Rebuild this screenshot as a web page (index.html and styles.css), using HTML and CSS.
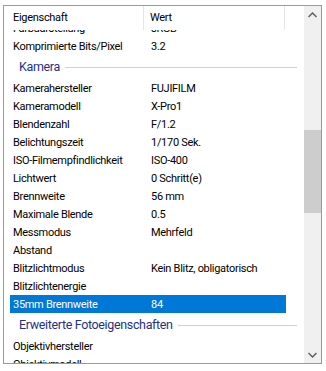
FILE: index.html
```html
<!DOCTYPE html>
<html>
<head>
<meta charset="utf-8">
<link rel="stylesheet" href="styles.css">
</head>
<body>
<div class="panel">
  <div class="list">
    <div class="header">
      <div class="hcell name">Eigenschaft</div>
      <div class="hcell value">Wert</div>
    </div>
    <div class="body">
      <div class="rows">
        <div class="row"><span class="k">Farbdarstellung</span><span class="v">sRGB</span></div>
        <div class="row"><span class="k">Komprimierte Bits/Pixel</span><span class="v">3.2</span></div>
        <div class="group"><span class="gt">Kamera</span><span class="gl"></span></div>
        <div class="row"><span class="k">Kamerahersteller</span><span class="v">FUJIFILM</span></div>
        <div class="row"><span class="k">Kameramodell</span><span class="v">X-Pro1</span></div>
        <div class="row"><span class="k">Blendenzahl</span><span class="v">F/1.2</span></div>
        <div class="row"><span class="k">Belichtungszeit</span><span class="v">1/170 Sek.</span></div>
        <div class="row"><span class="k">ISO-Filmempfindlichkeit</span><span class="v">ISO-400</span></div>
        <div class="row"><span class="k">Lichtwert</span><span class="v">0 Schritt(e)</span></div>
        <div class="row"><span class="k">Brennweite</span><span class="v">56 mm</span></div>
        <div class="row"><span class="k">Maximale Blende</span><span class="v">0.5</span></div>
        <div class="row"><span class="k">Messmodus</span><span class="v">Mehrfeld</span></div>
        <div class="row"><span class="k">Abstand</span><span class="v"></span></div>
        <div class="row"><span class="k">Blitzlichtmodus</span><span class="v">Kein Blitz, obligatorisch</span></div>
        <div class="row"><span class="k">Blitzlichtenergie</span><span class="v"></span></div>
        <div class="row selected"><span class="k">35mm Brennweite</span><span class="v">84</span></div>
        <div class="group"><span class="gt">Erweiterte Fotoeigenschaften</span><span class="gl"></span></div>
        <div class="row"><span class="k">Objektivhersteller</span><span class="v"></span></div>
        <div class="row"><span class="k">Objektivmodell</span><span class="v"></span></div>
      </div>
    </div>
  </div>
  <div class="scrollbar">
    <div class="arrow">
      <svg width="9" height="6" viewBox="0 0 9 6"><path d="M0.5 5 L4.5 1 L8.5 5" fill="none" stroke="#606060" stroke-width="1.5"/></svg>
    </div>
    <div class="track">
      <div class="space-top"></div>
      <div class="thumb"></div>
    </div>
    <div class="arrow">
      <svg width="9" height="6" viewBox="0 0 9 6"><path d="M0.5 1 L4.5 5 L8.5 1" fill="none" stroke="#606060" stroke-width="1.5"/></svg>
    </div>
  </div>
</div>
</body>
</html>
```

FILE: styles.css
```css
html, body {
  margin: 0;
  padding: 0;
  background: #ffffff;
}
body {
  padding: 5px 4px 0 3px;
  font-family: Roboto, "Liberation Sans", sans-serif;
  font-size: 11px;
  letter-spacing: -0.3px;
  color: #000;
}
.panel {
  display: flex;
  width: 317px;
  height: 357px;
  border: 1px solid #9a9a9a;
  background: #fff;
  overflow: hidden;
}
.list {
  flex: 1;
  display: flex;
  flex-direction: column;
  min-width: 0;
}
.header {
  display: flex;
  height: 24px;
  flex: none;
  background: #fff;
  position: relative;
  z-index: 1;
}
.hcell {
  display: flex;
  align-items: center;
  height: 24px;
  box-sizing: border-box;
  border-right: 1px solid #e5e5e5;
}
.hcell.name {
  width: 140px;
  padding-left: 9px;
  padding-bottom: 1px;
}
.hcell.value {
  width: 141px;
  padding-left: 6px;
  padding-bottom: 1px;
}
.body {
  flex: 1;
  overflow: hidden;
}
.rows {
  margin-top: -11px;
}
.row {
  display: flex;
  height: 18px;
  align-items: center;
  margin-left: 6px;
  width: 276px;
  white-space: nowrap;
}
.row .k {
  width: 141px;
  padding-left: 3px;
  box-sizing: border-box;
}
.row .v {
  flex: 1;
}
.row.selected {
  background: #0078d7;
  color: #fff;
}
.group {
  display: flex;
  align-items: center;
  height: 24px;
  padding-left: 15px;
  padding-right: 7px;
  white-space: nowrap;
}
.gt {
  color: #1e3287;
  font-size: 12.5px;
  letter-spacing: -0.35px;
  padding-bottom: 1px;
}
.gl {
  flex: 1;
  height: 1px;
  background: #ccd0e0;
  margin-left: 5px;
  margin-top: 1px;
}
.scrollbar {
  width: 17px;
  flex: none;
  display: flex;
  flex-direction: column;
  background: #f0f0f0;
}
.arrow {
  height: 17px;
  display: flex;
  align-items: center;
  justify-content: center;
  flex: none;
}
.track {
  flex: 1;
  display: flex;
  flex-direction: column;
}
.space-top {
  height: 107px;
}
.thumb {
  height: 83px;
  background: #cdcdcd;
}
```
